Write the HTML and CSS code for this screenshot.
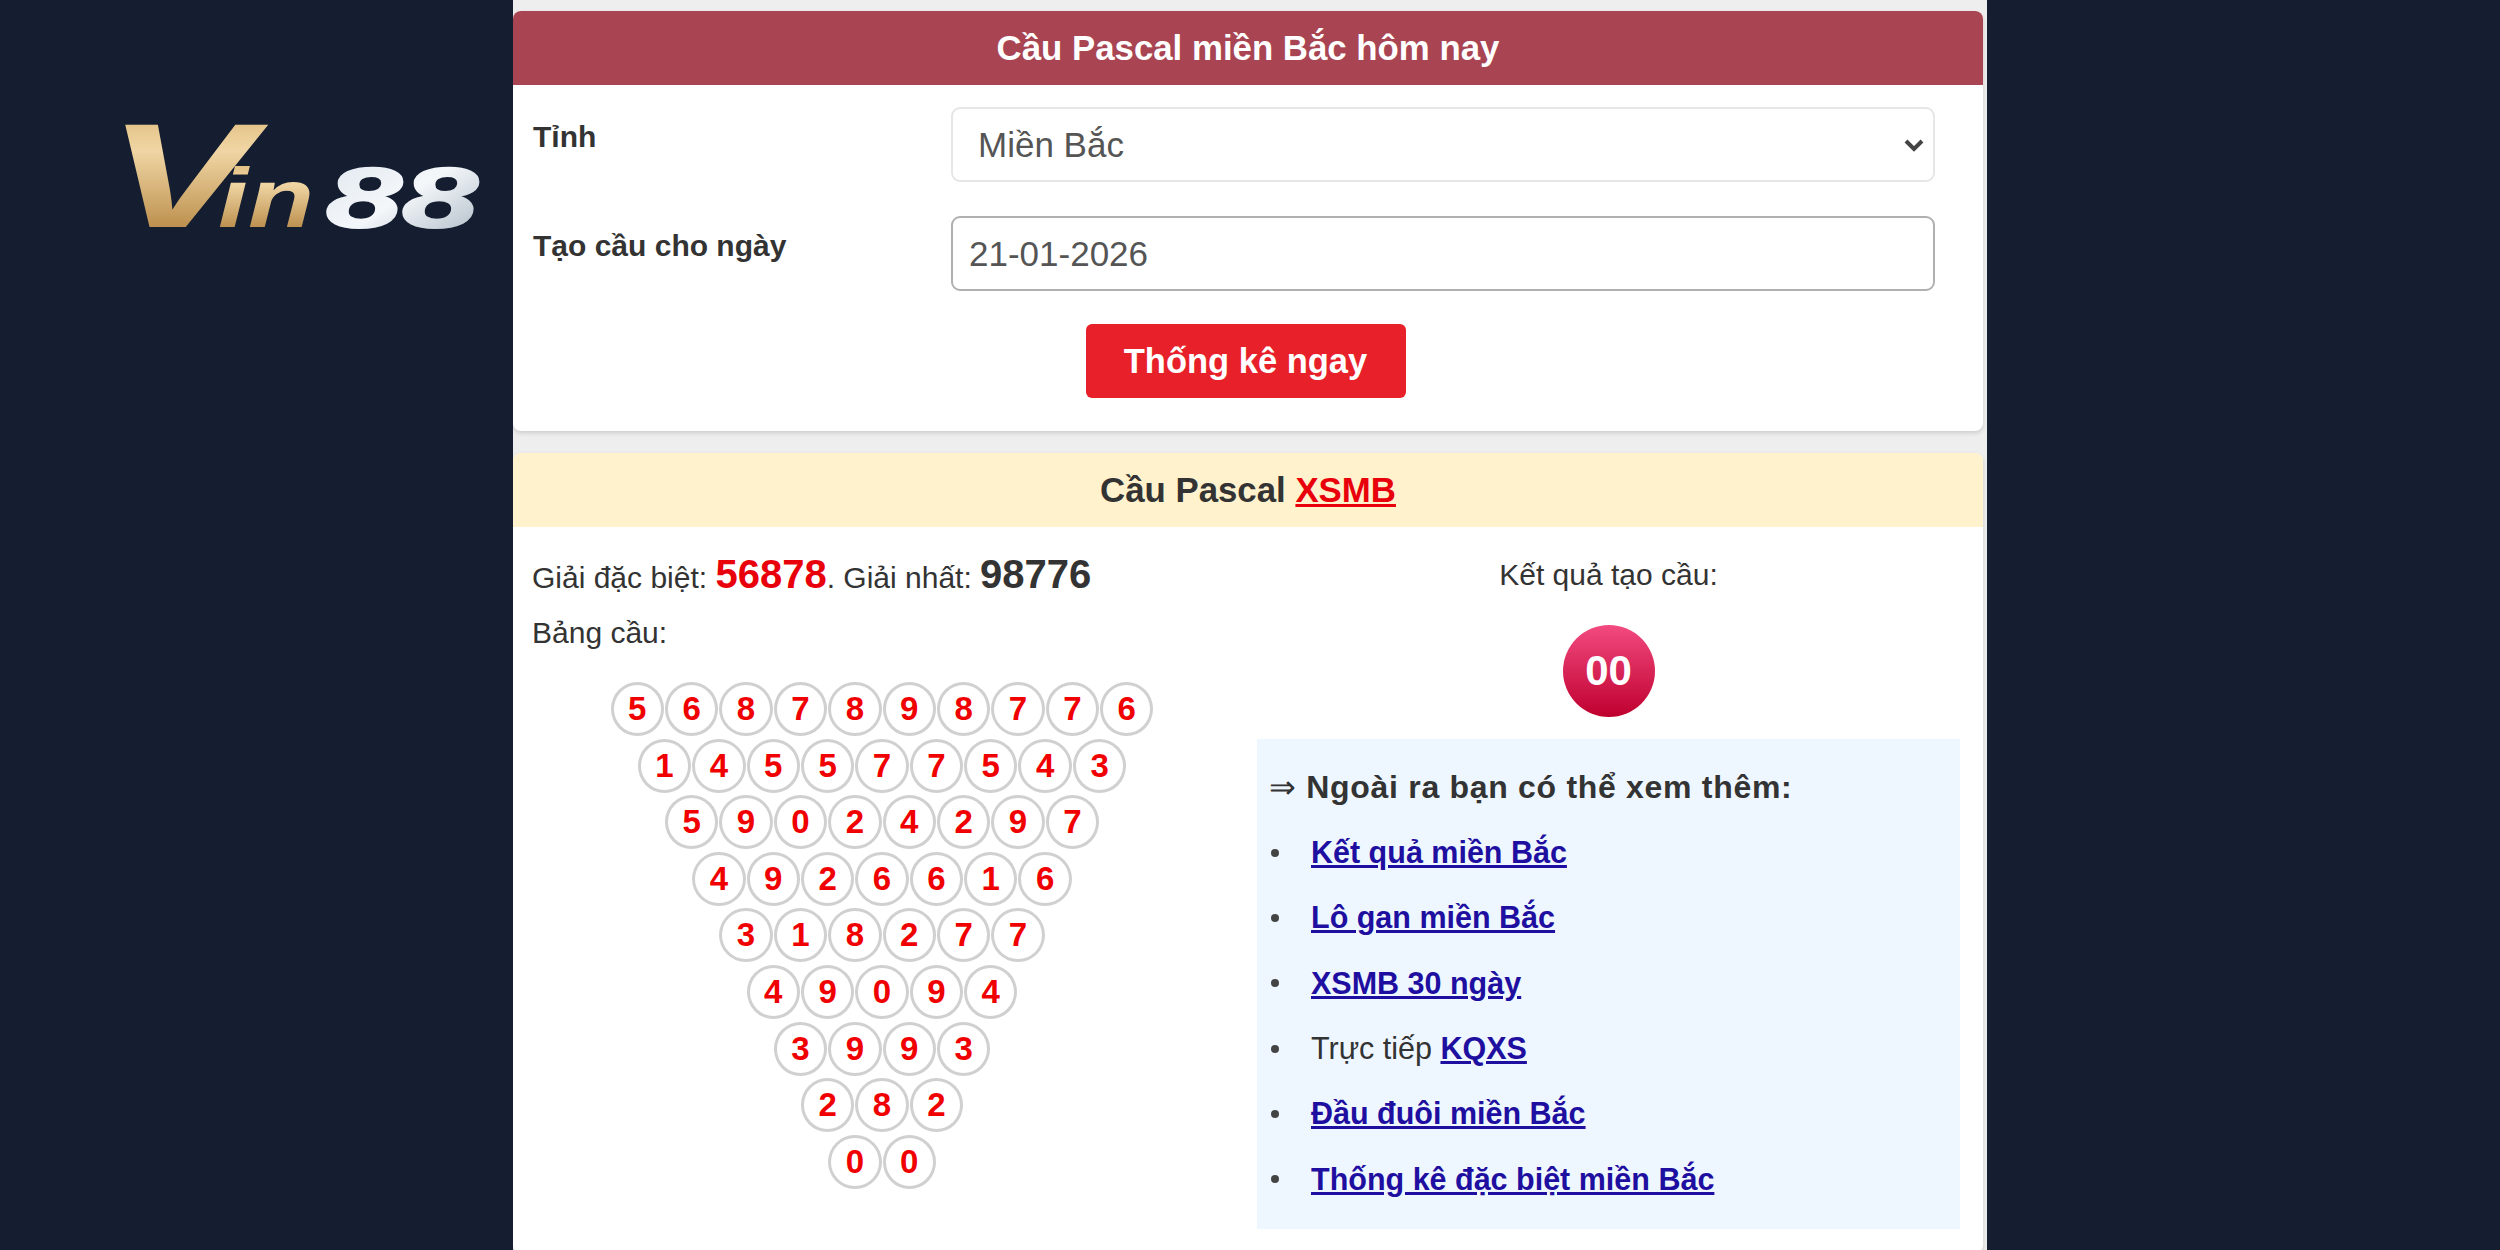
FILE: index.html
```html
<!DOCTYPE html>
<html lang="vi">
<head>
    <meta charset="UTF-8">
    <meta name="viewport" content="width=device-width, initial-scale=1.0">
    <title>Cầu Pascal miền Bắc hôm nay</title>
    <link rel="stylesheet" href="styles.css">
</head>
<body>
    <aside class="side side-left">
        <svg class="logo" width="380" height="180" viewBox="0 0 380 180" role="img" aria-label="Vin88">
            <defs>
                <linearGradient id="gold" x1="0" y1="0" x2="0" y2="1">
                    <stop offset="0" stop-color="#d9b06e"/>
                    <stop offset="0.35" stop-color="#f0d6a4"/>
                    <stop offset="1" stop-color="#a8742c"/>
                </linearGradient>
                <linearGradient id="silver" x1="0" y1="0" x2="1" y2="1">
                    <stop offset="0" stop-color="#dfe6ee"/>
                    <stop offset="0.5" stop-color="#f4f7fa"/>
                    <stop offset="1" stop-color="#a9b6c2"/>
                </linearGradient>
            </defs>
            <text class="logo-v" x="-13" y="140" fill="url(#gold)" textLength="146" lengthAdjust="spacingAndGlyphs">V</text>
            <text class="logo-in" x="98" y="140" fill="url(#gold)" textLength="96" lengthAdjust="spacingAndGlyphs">in</text>
            <text class="logo-num" x="206" y="140" fill="url(#silver)" stroke="url(#silver)" stroke-width="2" textLength="152" lengthAdjust="spacingAndGlyphs">88</text>
        </svg>
    </aside>

    <main class="page">
        <section class="panel panel-form">
            <h2 class="panel-title title-red">Cầu Pascal miền Bắc hôm nay</h2>
            <div class="form-body">
                <div class="form-row">
                    <label class="form-label" for="province">Tỉnh</label>
                    <select class="form-select" id="province">
                        <option>Miền Bắc</option>
                    </select>
                </div>
                <div class="form-row">
                    <label class="form-label" for="date">Tạo cầu cho ngày</label>
                    <input class="form-input" id="date" type="text" value="21-01-2026">
                </div>
                <div class="form-action">
                    <button class="btn-submit">Thống kê ngay</button>
                </div>
            </div>
        </section>

        <section class="panel panel-result">
            <h2 class="panel-title title-yellow">Cầu Pascal <a href="#">XSMB</a></h2>
            <div class="result-body">
                <div class="result-left">
                    <p class="prize-line">Giải đặc biệt: <b class="prize-red">56878</b>. Giải nhất: <b class="prize-dark">98776</b></p>
                    <p class="table-label">Bảng cầu:</p>
                    <div class="pascal">
                        <div class="pascal-row"><span>5</span><span>6</span><span>8</span><span>7</span><span>8</span><span>9</span><span>8</span><span>7</span><span>7</span><span>6</span></div>
                        <div class="pascal-row"><span>1</span><span>4</span><span>5</span><span>5</span><span>7</span><span>7</span><span>5</span><span>4</span><span>3</span></div>
                        <div class="pascal-row"><span>5</span><span>9</span><span>0</span><span>2</span><span>4</span><span>2</span><span>9</span><span>7</span></div>
                        <div class="pascal-row"><span>4</span><span>9</span><span>2</span><span>6</span><span>6</span><span>1</span><span>6</span></div>
                        <div class="pascal-row"><span>3</span><span>1</span><span>8</span><span>2</span><span>7</span><span>7</span></div>
                        <div class="pascal-row"><span>4</span><span>9</span><span>0</span><span>9</span><span>4</span></div>
                        <div class="pascal-row"><span>3</span><span>9</span><span>9</span><span>3</span></div>
                        <div class="pascal-row"><span>2</span><span>8</span><span>2</span></div>
                        <div class="pascal-row"><span>0</span><span>0</span></div>
                    </div>
                </div>
                <div class="result-right">
                    <p class="result-label">Kết quả tạo cầu:</p>
                    <div class="ball">00</div>
                    <div class="more-box">
                        <p class="more-title"><span class="arrow">⇒</span> Ngoài ra bạn có thể xem thêm:</p>
                        <ul class="more-list">
                            <li><a href="#">Kết quả miền Bắc</a></li>
                            <li><a href="#">Lô gan miền Bắc</a></li>
                            <li><a href="#">XSMB 30 ngày</a></li>
                            <li>Trực tiếp <a href="#">KQXS</a></li>
                            <li><a href="#">Đầu đuôi miền Bắc</a></li>
                            <li><a href="#">Thống kê đặc biệt miền Bắc</a></li>
                        </ul>
                    </div>
                </div>
            </div>
        </section>
    </main>

    <aside class="side side-right"></aside>
</body>
</html>
```

FILE: styles.css
```css
html, body {
    height: 100%;
}

body {
    font-family: "Liberation Sans", Arial, sans-serif;
    background-color: #141e30;
    color: #333;
    margin: 0;
    padding: 0;
    display: flex;
    overflow: hidden;
}

.side {
    width: 513px;
    flex: none;
}

.side-left {
    padding: 87px 0 0 120px;
    box-sizing: border-box;
}

.logo {
    display: block;
    overflow: visible;
}

.logo text {
    font-family: "Liberation Sans", Arial, sans-serif;
    font-style: italic;
    font-weight: bold;
}

.logo-v {
    font-size: 148px;
}

.logo-in {
    font-size: 84px;
}

.logo-num {
    font-size: 86px;
}

.page {
    width: 1474px;
    flex: none;
    box-sizing: border-box;
    background-color: #eee;
    padding: 11px 4px 0 0;
    height: 1250px;
    overflow: hidden;
}

.panel {
    background-color: #fff;
    border-radius: 8px;
    box-shadow: 0 2px 4px rgba(0, 0, 0, 0.15);
    overflow: hidden;
}

.panel-form {
    height: 420px;
    margin-bottom: 22px;
}

.panel-result {
    height: 800px;
}

.panel-title {
    margin: 0;
    height: 74px;
    line-height: 74px;
    text-align: center;
    font-size: 34.8px;
    font-weight: bold;
}

.title-red {
    background-color: #a94452;
    color: #fff;
}

.title-yellow {
    background-color: #fff2cc;
    color: #333;
}

.title-yellow a {
    color: #e8000b;
}

/* form */
.form-body {
    padding: 22px 48px 0 20px;
}

.form-row {
    display: flex;
    align-items: flex-start;
    margin-bottom: 34px;
}

.form-label {
    width: 418px;
    flex: none;
    font-size: 30px;
    font-weight: bold;
    color: #333;
    line-height: 60px;
}

.form-select, .form-input {
    flex: 1;
    height: 75px;
    box-sizing: border-box;
    background-color: #fff;
    border-radius: 9px;
    font-family: "Liberation Sans", Arial, sans-serif;
    font-size: 35px;
    color: #555;
}

.form-select {
    appearance: none;
    border: 2px solid #e6e6e6;
    padding: 0 0 0 25px;
    background-image: url("data:image/svg+xml,%3Csvg xmlns='http://www.w3.org/2000/svg' width='20' height='14' viewBox='0 0 20 14'%3E%3Cpath d='M2 3l8 8 8-8' fill='none' stroke='%23444' stroke-width='4'/%3E%3C/svg%3E");
    background-repeat: no-repeat;
    background-position: right 9px center;
}

.form-input {
    border: 2px solid #b0b0b0;
    padding: 0 16px;
}

.form-action {
    text-align: center;
    margin-top: -1px;
    padding-left: 23px;
}

.btn-submit {
    width: 320px;
    height: 74px;
    background-color: #e8202a;
    color: #fff;
    border: none;
    border-radius: 6px;
    font-family: "Liberation Sans", Arial, sans-serif;
    font-size: 34.5px;
    font-weight: bold;
}

/* result */
.result-body {
    display: grid;
    grid-template-columns: 700px 703px;
    column-gap: 25px;
    padding: 0 23px 0 19px;
}

.prize-line {
    margin: 24px 0 0;
    font-size: 30px;
    line-height: 46px;
}

.prize-red {
    font-size: 40px;
    color: #e8000b;
}

.prize-dark {
    font-size: 40px;
    color: #333;
}

.table-label {
    margin: 9px 0 0;
    font-size: 30px;
    line-height: 46px;
}

.pascal {
    margin-top: 26px;
    display: flex;
    flex-direction: column;
    row-gap: 2.6px;
}

.pascal-row {
    display: flex;
    justify-content: center;
    column-gap: 1px;
}

.pascal-row span {
    width: 53.4px;
    height: 54px;
    box-sizing: border-box;
    border: 3.5px solid #d0d0d0;
    border-radius: 50%;
    text-align: center;
    line-height: 47px;
    font-size: 33px;
    font-weight: bold;
    color: #f00000;
}

.result-label {
    margin: 25px 0 0;
    text-align: center;
    font-size: 30px;
    line-height: 46px;
}

.ball {
    width: 92px;
    height: 92px;
    margin: 27px auto 22px;
    border-radius: 50%;
    background: linear-gradient(#f24a80, #bf002e);
    color: #fff;
    font-size: 42px;
    font-weight: bold;
    line-height: 92px;
    text-align: center;
}

.more-box {
    background-color: #eef7ff;
    height: 490px;
    box-sizing: border-box;
    padding: 26px 12px 0;
}

.more-title {
    margin: 0;
    font-size: 32px;
    line-height: 44px;
    font-weight: bold;
    letter-spacing: 0.7px;
}

.arrow {
    font-weight: normal;
}

.more-list {
    list-style: none;
    margin: 11px 0 0;
    padding: 0;
    font-size: 30.5px;
}

.more-list li {
    height: 65.3px;
    line-height: 65px;
    display: flex;
    align-items: center;
    white-space: pre;
}

.more-list li::before {
    content: "";
    width: 8px;
    height: 8px;
    flex: none;
    margin: 0 32px 0 2px;
    border-radius: 50%;
    background-color: #444;
}

.more-list a {
    color: #1f0fa0;
    font-weight: bold;
}
```
